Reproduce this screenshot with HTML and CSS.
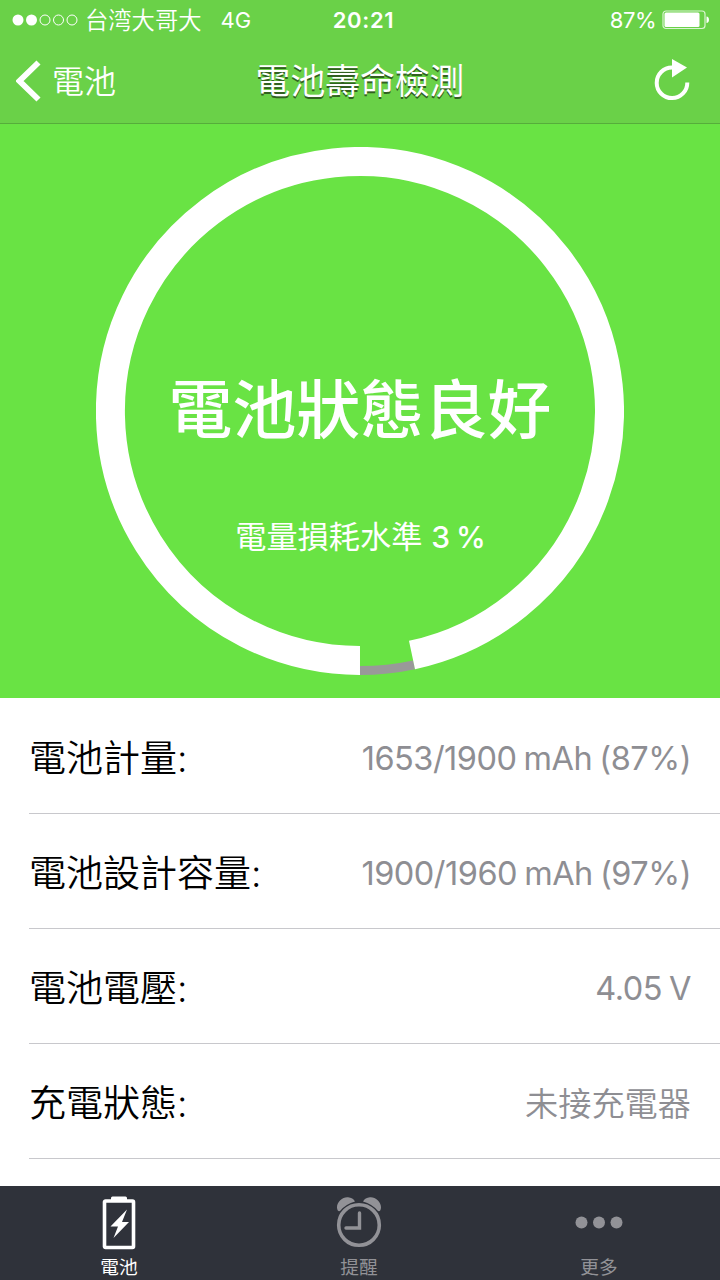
FILE: index.html
```html
<!DOCTYPE html>
<html lang="zh-Hant">
<head>
<meta charset="utf-8">
<title>電池壽命檢測</title>
<link rel="stylesheet" href="styles.css">
</head>
<body>
<div class="app">
  <header class="header">
    <div class="status">
      <div class="status-left">
        <svg class="signal" width="66" height="14" viewBox="0 0 66 14">
          <circle cx="6" cy="7" r="5.5" fill="#fff"/><circle cx="19.5" cy="7" r="5.5" fill="#fff"/>
          <g fill="none" stroke="#fff" stroke-width="1"><circle cx="33" cy="7" r="5"/><circle cx="46.500" cy="7" r="5"/><circle cx="60" cy="7" r="5"/></g>
        </svg>
        <span class="carrier">台湾大哥大</span>
        <span class="network">4G</span>
      </div>
      <span class="clock">20:21</span>
      <div class="status-right">
        <span class="percent">87%</span>
        <svg width="48" height="20" viewBox="0 0 48 20">
          <rect x="1" y="1" width="42" height="17.500" rx="3" fill="none" stroke="#fff" stroke-opacity=".75" stroke-width="1.200"/>
          <rect x="2.500" y="2.500" width="35" height="14.500" rx="1.500" fill="#fff"/>
          <path d="M44.500 6.500c3.300 0 3.300 6.500 0 6.500z" fill="#fff"/>
        </svg>
      </div>
    </div>
    <nav class="nav">
      <div class="back">
        <svg width="25" height="42" viewBox="0 0 25 42"><path d="M22.500 2.500L3.500 21l19 18.500" fill="none" stroke="#fff" stroke-width="5.800"/></svg>
        <span class="back-label">電池</span>
      </div>
      <h1 class="title">電池壽命檢測</h1>
      <div class="refresh">
        <svg width="36" height="44" viewBox="0 0 36 44"><path d="M18 9.500A15.300 15.300 0 1 0 33.300 24.500" fill="none" stroke="#fff" stroke-width="4"/><path d="M18 1v18.500l15-10z" fill="#fff"/></svg>
      </div>
    </nav>
  </header>

  <section class="gauge">
    <svg class="ring" width="528" height="528" viewBox="0 0 528 528">
      <path d="M264 523.500A259.500 259.500 0 0 0 318.100 517.800" fill="none" stroke="#999" stroke-width="9"/>
      <path d="M264 513.500A249.500 249.500 0 1 1 316 508" fill="none" stroke="#fff" stroke-width="29"/>
    </svg>
    <div class="gauge-text">
      <p class="state">電池狀態良好</p>
      <p class="wear">電量損耗水準 <span class="wear-num">3 %</span></p>
    </div>
  </section>

  <main class="list">
    <div class="row"><span class="label">電池計量:</span><span class="value">1653/1900 mAh (87%)</span></div>
    <div class="row"><span class="label">電池設計容量:</span><span class="value">1900/1960 mAh (97%)</span></div>
    <div class="row"><span class="label">電池電壓:</span><span class="value">4.05 V</span></div>
    <div class="row"><span class="label">充電狀態:</span><span class="value value-cjk">未接充電器</span></div>
  </main>

  <footer class="tabs">
    <div class="tab active">
      <svg width="34" height="54" viewBox="0 0 34 54"><path d="M9 4V2q0-1.500 1.500-1.500h13Q25 .500 25 2v2z" fill="#fff"/><rect x="2.500" y="5" width="29" height="46.500" rx="1" fill="none" stroke="#fff" stroke-width="3.600"/><path d="M25 13.500L8.500 30.500h7.500L11.500 42 27 26h-7z" fill="#fff"/></svg>
      <span>電池</span>
    </div>
    <div class="tab">
      <svg width="46" height="54" viewBox="0 0 46 54"><circle cx="23" cy="29" r="20.300" fill="none" stroke="currentColor" stroke-width="3.600"/><path d="M23.500 17V32H10" fill="none" stroke="currentColor" stroke-width="3.400" stroke-linecap="round"/><path d="M1.800 14.500C-1.500 8 6 .500 12 1.200q5 .500 7 4.300-9 2.500-14.500 9-1.500 1.500-2.700 0zM44.200 14.500C47.500 8 40 .500 34 1.200q-5 .500-7 4.300 9 2.500 14.500 9 1.500 1.500 2.700 0z" fill="currentColor"/></svg>
      <span>提醒</span>
    </div>
    <div class="tab">
      <svg width="48" height="54" viewBox="0 0 48 54" fill="currentColor"><circle cx="6.500" cy="26.500" r="6"/><circle cx="24" cy="26.500" r="6"/><circle cx="41.500" cy="26.500" r="6"/></svg>
      <span>更多</span>
    </div>
  </footer>
</div>
</body>
</html>
```
FILE: styles.css
```css
* { box-sizing: border-box; }
body, h1, p { margin: 0; }
body { font-family: Inter, "Noto Sans CJK TC", sans-serif; background: #fff; }
svg { display: block; flex: none; }
.app { width: 720px; height: 1280px; display: flex; flex-direction: column; overflow: hidden; }
.header { height: 124px; background: #6ad148; border-bottom: 1px solid #56ad3b; color: #fff; }
.status { height: 40px; display: grid; grid-template-columns: 1fr auto 1fr; align-items: center; padding: 0 10px 0 12px; line-height: 38px; }
.status-left { display: flex; align-items: center; }
.carrier { margin-left: 7px; padding-top: 2px; font-size: 23.300px; font-weight: 350; }
.network { margin-left: 19px; font-size: 22px; font-weight: 400; }
.clock { font-size: 22px; font-weight: 600; letter-spacing: .7px; padding-left: 5px; }
.status-right { display: flex; align-items: center; justify-content: flex-end; gap: 6px; }
.percent { font-size: 22px; font-weight: 400; letter-spacing: -.500px; }
.nav { height: 81px; display: grid; grid-template-columns: 1fr auto 1fr; align-items: center; padding: 0 16px; line-height: 60px; }
.back { display: flex; align-items: center; gap: 11px; font-size: 32px; font-weight: 350; }
.back-label { padding-top: 2px; }
.title { font-size: 34.800px; font-weight: 400; text-shadow: 0 1.500px 0 #31611f; }
.refresh { display: flex; justify-content: flex-end; padding: 0 14px 2px 0; }
.gauge { height: 574px; background: #69e344; display: grid; justify-items: center; padding-top: 22.500px; }
.ring, .gauge-text { grid-area: 1 / 1; }
.gauge-text { color: #fff; text-align: center; padding-top: 218px; }
.state { font-size: 63.800px; line-height: 90px; font-weight: 500; }
.wear { font-size: 31.200px; line-height: 44px; font-weight: 400; margin: 60px 0 0 1px; }
.wear-num { font-size: 30px; font-weight: 500; word-spacing: -2px; }
.list { flex: 1; padding: 1px 0 0 29px; overflow: hidden; }
.row { height: 115px; display: flex; align-items: center; justify-content: space-between; padding: 6px 29px 0 0; border-bottom: 1px solid #c8c8cc; line-height: 60px; }
.label { font-size: 37px; font-weight: 350; color: #000; }
.value { font-size: 32.500px; font-weight: 400; color: #8e8e93; letter-spacing: -.500px; word-spacing: -1.500px; }
.value-cjk { font-size: 33.200px; font-weight: 350; letter-spacing: 0; }
.tabs { height: 94px; background: #2f323a; display: grid; grid-template-columns: repeat(3, 240px); color: #929297; }
.tab { display: flex; flex-direction: column; align-items: center; padding: 10px 2px 0 0; font-size: 18.700px; line-height: 35px; }
.active { color: #fff; }
```
